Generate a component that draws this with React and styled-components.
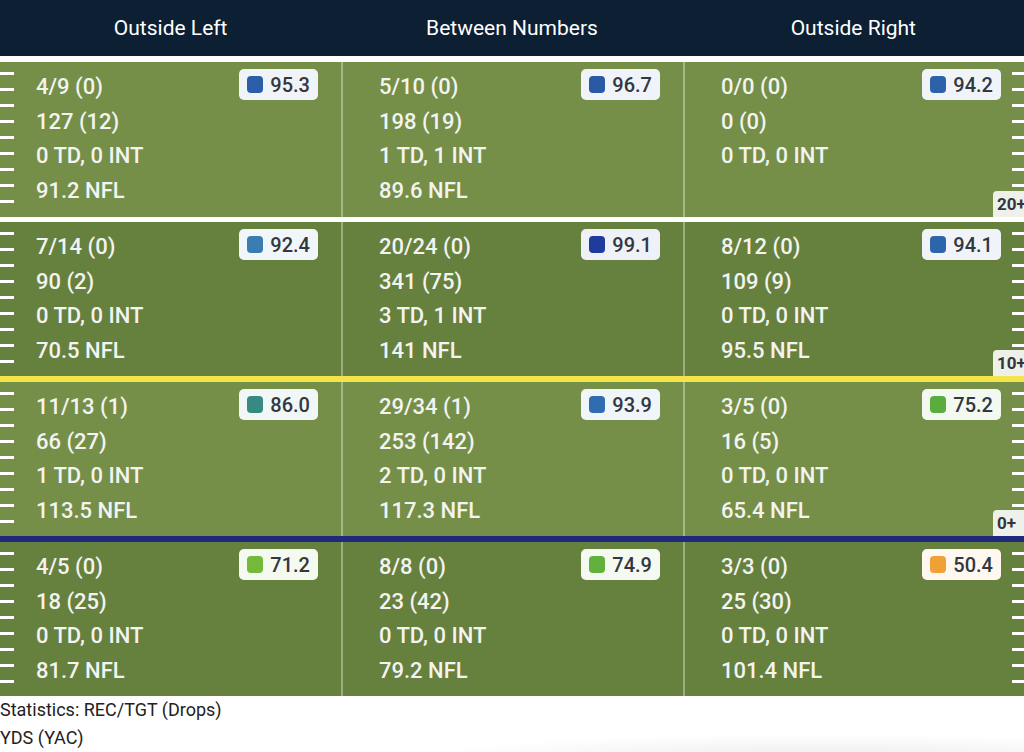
import React from 'react';
import styled, { createGlobalStyle } from 'styled-components';

const GlobalStyle = createGlobalStyle`
  html, body {
    margin: 0;
    padding: 0;
    background: #fff;
  }
  body {
    font-family: Roboto, "Liberation Sans", Arial, sans-serif;
  }
`;

const Page = styled.div`
  width: 1024px;
  height: 752px;
  overflow: hidden;
`;

const Header = styled.div`
  display: grid;
  grid-template-columns: repeat(3, 1fr);
  height: 56px;
  background: #0c1f33;
  color: #fff;
  font-size: 21px;
`;

const HeaderCell = styled.div`
  display: flex;
  align-items: center;
  justify-content: center;
  padding-bottom: 1px;
`;

const Stripe = styled.div`
  height: ${(p) => p.$h}px;
  background: ${(p) => p.$color};
`;

const marks = 'repeating-linear-gradient(to bottom, transparent 0 10px, #fff 10px 13px, transparent 13px 16px)';

const Row = styled.div`
  position: relative;
  display: grid;
  grid-template-columns: 341px 342px 341px;
  height: ${(p) => p.$h}px;
  background-color: ${(p) => (p.$dark ? '#66803e' : '#758f48')};
  background-image: ${marks}, ${marks};
  background-size: 14px 142px, 12px 142px;
  background-position: left top, right top;
  background-repeat: no-repeat;
`;

const Cell = styled.div`
  display: flex;
  justify-content: space-between;
  align-items: flex-start;
  padding: 8px 23px 0 36px;
  border-left: ${(p) => (p.$first ? 'none' : '2px solid rgba(255,255,255,0.35)')};
`;

const Stats = styled.div`
  display: flex;
  flex-direction: column;
  font-size: 22px;
  font-weight: 500;
  line-height: 34.5px;
  color: #f3f3f1;
`;

const Badge = styled.div`
  display: flex;
  align-items: center;
  gap: 7px;
  height: 31px;
  margin-top: -1px;
  padding: 0 8px;
  border-radius: 5px;
  background: ${(p) => p.$bg};
  font-size: 20px;
  font-weight: 500;
  color: #33373e;
`;

const Dot = styled.span`
  width: 16px;
  height: 17px;
  border-radius: 4px;
  background: ${(p) => p.$color};
`;

const YardLabel = styled.div`
  position: absolute;
  left: 993px;
  bottom: 0;
  width: 40px;
  height: 26px;
  line-height: 27px;
  padding-left: 4px;
  box-sizing: border-box;
  border-radius: 4px 0 0 0;
  background: #eef0ea;
  font-size: 17px;
  font-weight: 700;
  color: #33363b;
  white-space: nowrap;
`;

const Footer = styled.div`
  height: 56px;
  font-size: 18px;
  line-height: 28px;
  color: #222;
  background: radial-gradient(ellipse 55% 60% at 80% 110%, #ececec, #fff 70%);
`;

const tint = (hex, amt) => {
  const n = parseInt(hex.slice(1), 16);
  const mix = (c) => Math.round(c * amt + 255 * (1 - amt));
  return `rgb(${mix(n >> 16)}, ${mix((n >> 8) & 255)}, ${mix(n & 255)})`;
};

const rows = [
  {
    dark: false, h: 155, after: { color: '#fff', h: 5 }, label: '20+',
    cells: [
      { stats: ['4/9 (0)', '127 (12)', '0 TD, 0 INT', '91.2 NFL'], grade: '95.3', color: '#2a5ea8' },
      { stats: ['5/10 (0)', '198 (19)', '1 TD, 1 INT', '89.6 NFL'], grade: '96.7', color: '#2a5aa6' },
      { stats: ['0/0 (0)', '0 (0)', '0 TD, 0 INT'], grade: '94.2', color: '#2c62a9' },
    ],
  },
  {
    dark: true, h: 154, after: { color: '#f3e549', h: 6 }, label: '10+',
    cells: [
      { stats: ['7/14 (0)', '90 (2)', '0 TD, 0 INT', '70.5 NFL'], grade: '92.4', color: '#3a7db3' },
      { stats: ['20/24 (0)', '341 (75)', '3 TD, 1 INT', '141 NFL'], grade: '99.1', color: '#1f3b9c' },
      { stats: ['8/12 (0)', '109 (9)', '0 TD, 0 INT', '95.5 NFL'], grade: '94.1', color: '#2d65aa' },
    ],
  },
  {
    dark: false, h: 154, after: { color: '#1f2a7e', h: 6 }, label: '0+',
    cells: [
      { stats: ['11/13 (1)', '66 (27)', '1 TD, 0 INT', '113.5 NFL'], grade: '86.0', color: '#378a82' },
      { stats: ['29/34 (1)', '253 (142)', '2 TD, 0 INT', '117.3 NFL'], grade: '93.9', color: '#2f6db0' },
      { stats: ['3/5 (0)', '16 (5)', '0 TD, 0 INT', '65.4 NFL'], grade: '75.2', color: '#58ad3c' },
    ],
  },
  {
    dark: true, h: 154,
    cells: [
      { stats: ['4/5 (0)', '18 (25)', '0 TD, 0 INT', '81.7 NFL'], grade: '71.2', color: '#74ba3a' },
      { stats: ['8/8 (0)', '23 (42)', '0 TD, 0 INT', '79.2 NFL'], grade: '74.9', color: '#62b13e' },
      { stats: ['3/3 (0)', '25 (30)', '0 TD, 0 INT', '101.4 NFL'], grade: '50.4', color: '#f0a035' },
    ],
  },
];

export default function App() {
  return (
    <Page>
      <GlobalStyle />
      <Header>
        <HeaderCell>Outside Left</HeaderCell>
        <HeaderCell>Between Numbers</HeaderCell>
        <HeaderCell>Outside Right</HeaderCell>
      </Header>
      <Stripe $color="#fff" $h={6} />
      {rows.map((row, i) => (
        <React.Fragment key={i}>
          <Row $dark={row.dark} $h={row.h}>
            {row.cells.map((cell, j) => (
              <Cell key={j} $first={j === 0}>
                <Stats>
                  {cell.stats.map((s) => (
                    <span key={s}>{s}</span>
                  ))}
                </Stats>
                <Badge $bg={tint(cell.color, 0.07)}>
                  <Dot $color={cell.color} />
                  {cell.grade}
                </Badge>
              </Cell>
            ))}
            {row.label && <YardLabel>{row.label}</YardLabel>}
          </Row>
          {row.after && <Stripe $color={row.after.color} $h={row.after.h} />}
        </React.Fragment>
      ))}
      <Footer>
        <div>Statistics: REC/TGT (Drops)</div>
        <div>YDS (YAC)</div>
      </Footer>
    </Page>
  );
}
